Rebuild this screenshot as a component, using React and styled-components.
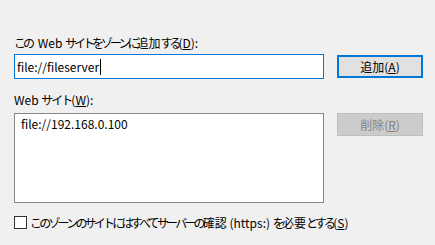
import styled, { createGlobalStyle } from 'styled-components';

const GlobalStyle = createGlobalStyle`
  html, body {
    margin: 0;
    padding: 0;
    background: #f0f0f0;
  }
  body {
    font-family: "Noto Sans CJK JP", "Noto Sans", sans-serif;
    font-size: 12px;
    color: #000;
  }
`;

const Dialog = styled.div`
  width: 435px;
  height: 245px;
  box-sizing: border-box;
  padding: 35px 12px 0 14px;
  display: grid;
  grid-template-columns: 310px 86px;
  column-gap: 13px;
  align-items: start;
  align-content: start;
`;

const Label = styled.div`
  grid-column: 1 / -1;
  height: 16px;
  line-height: 16px;
  margin-bottom: ${props => props.$gap}px;
`;

const TextInput = styled.div`
  height: 25px;
  box-sizing: border-box;
  border: 1px solid #0078d7;
  background: #fff;
  padding: 0 2px;
  display: flex;
  align-items: center;
  line-height: 16px;
`;

const Caret = styled.span`
  display: inline-block;
  width: 1px;
  height: 16px;
  background: #000;
  margin-left: 1px;
`;

const Button = styled.div`
  margin-top: ${props => props.$offset || 0}px;
  height: 23px;
  box-sizing: border-box;
  display: flex;
  align-items: center;
  justify-content: center;
  background: ${props => props.$disabled ? '#cccccc' : '#e1e1e1'};
  border: ${props => props.$focused ? '2px solid #0078d7' : '1px solid #bfbfbf'};
  color: ${props => props.$disabled ? '#838383' : '#000'};
`;

const ListBox = styled.div`
  height: 90px;
  box-sizing: border-box;
  border: 1px solid #828790;
  background: #fff;
  padding: 2px 6px;
  line-height: 16px;
`;

const Spacer = styled.div`
  grid-column: 1 / -1;
  height: ${props => props.$h}px;
`;

const CheckRow = styled.label`
  grid-column: 1 / -1;
  display: flex;
  align-items: center;
  gap: 3px;
  height: 16px;
`;

const Box = styled.span`
  width: 13px;
  height: 13px;
  box-sizing: border-box;
  border: 1px solid #333;
  background: #fff;
`;

const U = styled.span`
  text-decoration: underline;
`;

// kana are set tighter, like the proportional UI font in the original
const K = styled.span`
  letter-spacing: ${props => props.$ls || -2}px;
  margin-right: ${props => props.$after || 0}px;
`;

export default function App() {
  return (
    <>
      <GlobalStyle />
      <Dialog>
        <Label $gap={3}>
          <K $ls={-3} $after={3}>この</K> Web <K $ls={-3}>サイトをゾーンに</K>追加<K $ls={-3}>する</K>(<U>D</U>):
        </Label>
        <TextInput>file://fileserver<Caret /></TextInput>
        <Button $focused $offset={1}>追加(<U>A</U>)</Button>
        <Spacer $h={13} />
        <Label $gap={5}>Web <K>サイト</K>(<U>W</U>):</Label>
        <ListBox>file://192.168.0.100</ListBox>
        <Button $disabled>削除(<U>R</U>)</Button>
        <Spacer $h={11} />
        <CheckRow>
          <Box />
          <span>
            <K $ls={-2.8}>このゾーンのサイトにはすべてサーバーの</K>確認 (https:) <K $ls={-2.8}>を</K>必要<K $ls={-2.8}>とする</K>(<U>S</U>)
          </span>
        </CheckRow>
      </Dialog>
    </>
  );
}
